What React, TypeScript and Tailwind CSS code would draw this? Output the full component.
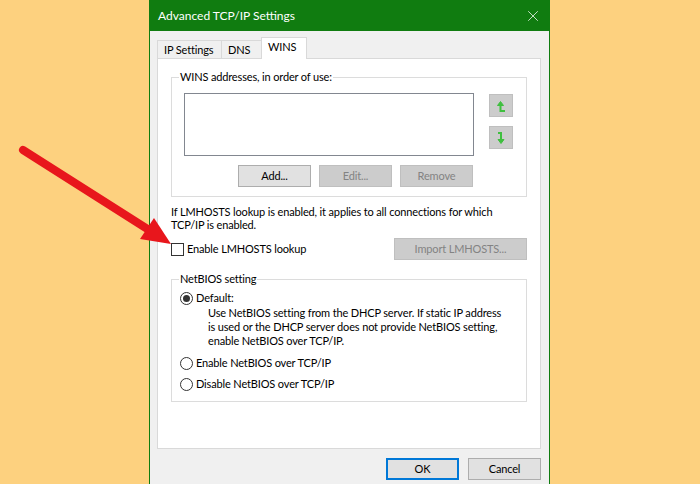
import { X } from "lucide-react";

const tabs = [
  { label: "IP Settings", width: "w-[65px]" },
  { label: "DNS", width: "w-[41px]" },
];

function RadioDot({ checked }: { checked?: boolean }) {
  return (
    <span className="flex h-[13px] w-[13px] shrink-0 items-center justify-center rounded-full border border-[#333333] bg-white">
      {checked && <span className="h-[7px] w-[7px] rounded-full bg-[#333333]" />}
    </span>
  );
}

function MoveUpIcon() {
  return (
    <svg width="24" height="23" viewBox="0 0 24 23">
      <path d="M10.5 10 V16 H15" fill="none" stroke="#3fbf3f" strokeWidth="2" />
      <path d="M7.5 10.5 L10.5 6.5 L13.5 10.5 Z" fill="#3fbf3f" stroke="#3fbf3f" strokeWidth="1" strokeLinejoin="round" />
    </svg>
  );
}

function MoveDownIcon() {
  return (
    <svg width="24" height="23" viewBox="0 0 24 23">
      <path d="M8 6 H11 V12.5" fill="none" stroke="#3fbf3f" strokeWidth="2" />
      <path d="M8 12.5 L11 16.5 L14 12.5 Z" fill="#3fbf3f" stroke="#3fbf3f" strokeWidth="1" strokeLinejoin="round" />
    </svg>
  );
}

export default function App() {
  return (
    <div className="relative h-[484px] w-[700px] overflow-hidden whitespace-nowrap bg-[#fdd17f] font-['Lato',sans-serif] text-[11px] leading-[16px] tracking-[-0.15px] text-black">
      <div className="ml-[149px] flex h-[520px] w-[401px] flex-col border-x border-[#107c10] bg-[#f0f0f0]">
        {/* title bar */}
        <div className="flex h-[31px] items-center justify-between bg-[#107c10] pl-[8px] pr-[7px] text-[12px] tracking-normal text-white">
          <span>Advanced TCP/IP Settings</span>
          <X size={18} strokeWidth={1} />
        </div>

        {/* tab strip */}
        <div className="flex items-end pl-[7px] pt-[6px]">
          {tabs.map((t) => (
            <div
              key={t.label}
              className={`flex h-[18px] items-center border border-b-0 border-[#d9d9d9] bg-[#f0f0f0] pl-[6px] -mr-px ${t.width}`}
            >
              {t.label}
            </div>
          ))}
          <div className="relative z-10 -mb-px flex h-[22px] w-[46px] items-start border border-b-0 border-[#d9d9d9] bg-white pl-[6px] pt-[1px]">
            WINS
          </div>
        </div>

        {/* tab panel */}
        <div className="ml-[7px] flex h-[391px] w-[384px] flex-col border border-[#d9d9d9] bg-white pl-[13px]">
          <fieldset className="mt-[10px] w-[356px] border border-[#dcdcdc] pb-[9px] pl-[12px] pt-[8px]">
            <legend className="-ml-[5px] px-[1px]">WINS addresses, in order of use:</legend>
            <div className="flex">
              <div className="h-[63px] w-[290px] border border-[#828790] bg-white" />
              <div className="ml-[15px] flex flex-col gap-[9px] pt-[1px]">
                <div className="h-[23px] w-[24px] border border-[#bfbfbf] bg-[#cccccc]">
                  <MoveUpIcon />
                </div>
                <div className="h-[23px] w-[24px] border border-[#bfbfbf] bg-[#cccccc]">
                  <MoveDownIcon />
                </div>
              </div>
            </div>
            <div className="ml-[54px] mt-[9px] flex gap-[8px]">
              <div className="flex h-[22px] w-[73px] items-center justify-center border border-[#adadad] bg-[#e1e1e1]">
                Add...
              </div>
              <div className="flex h-[22px] w-[73px] items-center justify-center border border-[#bfbfbf] bg-[#cccccc] text-[#838383]">
                Edit...
              </div>
              <div className="flex h-[22px] w-[73px] items-center justify-center border border-[#bfbfbf] bg-[#cccccc] text-[#838383]">
                Remove
              </div>
            </div>
          </fieldset>

          <p className="mt-[8px] leading-[13px]">
            If LMHOSTS lookup is enabled, it applies to all connections for which
            <br />
            TCP/IP is enabled.
          </p>

          <div className="mt-[7px] flex h-[22px] w-[356px] items-center justify-between">
            <div className="flex items-center gap-[3px]">
              <span className="h-[13px] w-[13px] border border-[#333333] bg-white" />
              <span>Enable LMHOSTS lookup</span>
            </div>
            <div className="flex h-[22px] w-[133px] items-center justify-center border border-[#bfbfbf] bg-[#cccccc] text-[#838383]">
              Import LMHOSTS...
            </div>
          </div>

          <fieldset className="mt-[11px] w-[356px] border border-[#dcdcdc] pb-[9px] pl-[8px] pt-[3px]">
            <legend className="-ml-px px-[1px]">NetBIOS setting</legend>
            <div className="flex h-[16px] items-center gap-[3px]">
              <RadioDot checked />
              <span>Default:</span>
            </div>
            <p className="pl-[28px] leading-[14px]">
              Use NetBIOS setting from the DHCP server. If static IP address
              <br />
              is used or the DHCP server does not provide NetBIOS setting,
              <br />
              enable NetBIOS over TCP/IP.
            </p>
            <div className="mt-[7px] flex h-[16px] items-center gap-[3px]">
              <RadioDot />
              <span>Enable NetBIOS over TCP/IP</span>
            </div>
            <div className="mt-[5px] flex h-[16px] items-center gap-[3px]">
              <RadioDot />
              <span>Disable NetBIOS over TCP/IP</span>
            </div>
          </fieldset>
        </div>

        {/* dialog buttons */}
        <div className="mt-[9px] flex justify-end gap-[9px] pr-[8px]">
          <div className="flex h-[22px] w-[73px] items-center justify-center border-2 border-[#0078d7] bg-[#e1e1e1]">
            OK
          </div>
          <div className="flex h-[22px] w-[73px] items-center justify-center border border-[#adadad] bg-[#e1e1e1]">
            Cancel
          </div>
        </div>
      </div>

      {/* red annotation arrow */}
      <svg className="pointer-events-none absolute left-0 top-0" width="700" height="484">
        <line x1="23" y1="150" x2="149" y2="230" stroke="#e8161c" strokeWidth="8" strokeLinecap="round" />
        <polygon points="171,244 140,239 154,218" fill="#e8161c" />
      </svg>
    </div>
  );
}
